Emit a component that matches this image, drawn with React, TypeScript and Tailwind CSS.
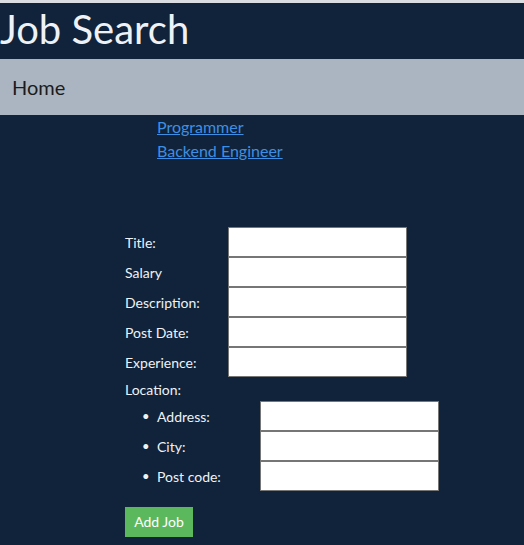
import React from 'react'

const fields = ['Title:', 'Salary', 'Description:', 'Post Date:', 'Experience:']
const location = ['Address:', 'City:', 'Post code:']

function App() {
    return (
        <div className="min-h-[545px] bg-[#10233a] font-['Lato',sans-serif]">
            <div className="h-[3px] bg-[#dadee3]" />
            <header className="h-[56px] flex items-center">
                <h1 className="text-[40px] leading-none text-[#eef2f6] -mt-[4px]">Job Search</h1>
            </header>
            <nav className="h-[56px] bg-[#abb5c1] px-3 flex items-center">
                <span className="text-[20px] text-[#1b1b1b]">Home</span>
            </nav>
            <ul className="pl-[157px] text-base leading-6">
                <li><a href="#" className="text-[#3e8fe3] underline">Programmer</a></li>
                <li><a href="#" className="text-[#3e8fe3] underline">Backend Engineer</a></li>
            </ul>
            <form className="ml-[125px] mt-[64px] text-sm text-[#eef2f6]">
                {fields.map((f) => (
                    <div key={f} className="flex items-center h-[30px]">
                        <label className="w-[103px] pt-[2px]">{f}</label>
                        <input className="w-[179px] h-[30px] bg-white border border-[#767676]" />
                    </div>
                ))}
                <div className="h-[24px] flex items-center pt-[2px]">Location:</div>
                <ul className="pl-[17px]">
                    {location.map((f) => (
                        <li key={f} className="flex items-center h-[30px]">
                            <span className="w-[15px] text-[13px]">•</span>
                            <label className="w-[103px] pt-[2px]">{f}</label>
                            <input className="w-[179px] h-[30px] bg-white border border-[#767676]" />
                        </li>
                    ))}
                </ul>
                <button type="button" className="mt-4 h-[30px] w-[68px] bg-[#5cb85c] text-white text-sm">
                    Add Job
                </button>
            </form>
        </div>
    )
}

export default App
